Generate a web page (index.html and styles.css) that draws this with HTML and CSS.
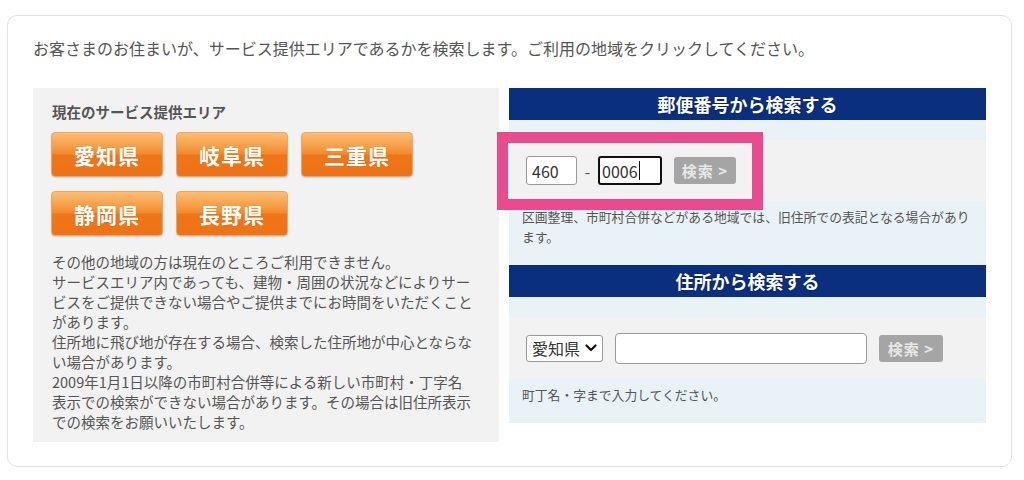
FILE: index.html
```html
<!DOCTYPE html>
<html lang="ja">
<head>
<meta charset="utf-8">
<title>サービス提供エリア検索</title>
<link rel="stylesheet" href="styles.css">
</head>
<body>
<div class="card">
  <p class="intro">お客さまのお住まいが、サービス提供エリアであるかを検索します。ご利用の地域をクリックしてください。</p>
  <div class="cols">
    <section class="area">
      <h2 class="area-title">現在のサービス提供エリア</h2>
      <div class="prefs">
        <a class="pref">愛知県</a>
        <a class="pref">岐阜県</a>
        <a class="pref">三重県</a>
        <a class="pref">静岡県</a>
        <a class="pref">長野県</a>
      </div>
      <div class="area-notes">
        <p>その他の地域の方は現在のところご利用できません。</p>
        <p>サービスエリア内であっても、建物・周囲の状況などによりサービスをご提供できない場合やご提供までにお時間をいただくことがあります。</p>
        <p>住所地に飛び地が存在する場合、検索した住所地が中心とならない場合があります。</p>
        <p>2009年1月1日以降の市町村合併等による新しい市町村・丁字名表示での検索ができない場合があります。その場合は旧住所表示での検索をお願いいたします。</p>
      </div>
    </section>
    <div class="search">
      <section class="search-block">
        <h3 class="search-head">郵便番号から検索する</h3>
        <div class="search-spacer"></div>
        <div class="search-row">
          <span class="field zip1">460</span>
          <span class="dash">-</span>
          <span class="field zip2">0006<span class="caret"></span></span>
          <span class="btn">検索 &gt;</span>
          <div class="highlight"></div>
        </div>
        <p class="search-note">区画整理、市町村合併などがある地域では、旧住所での表記となる場合があります。</p>
      </section>
      <section class="search-block">
        <h3 class="search-head">住所から検索する</h3>
        <div class="search-spacer"></div>
        <div class="search-row">
          <span class="field select">愛知県<svg class="chev" width="12" height="8" viewBox="0 0 12 8"><path d="M1.5 1.5 L6 6 L10.5 1.5" fill="none" stroke="#111" stroke-width="2.2" stroke-linecap="round" stroke-linejoin="round"/></svg></span>
          <span class="field addr"></span>
          <span class="btn btn-addr">検索 &gt;</span>
        </div>
        <p class="search-note">町丁名・字まで入力してください。</p>
      </section>
    </div>
  </div>
</div>
</body>
</html>
```
FILE: styles.css
```css
* { box-sizing: border-box; }
body {
  margin: 0;
  background: #fff;
  font-family: "Noto Sans CJK JP", "Noto Sans", sans-serif;
  color: #555;
}
.card {
  width: 1005px;
  height: 452px;
  margin: 15px 0 0 7px;
  border: 1px solid #e3e3e3;
  border-radius: 10px;
  padding: 20px 25px 0 25px;
}
.intro {
  margin: 0 0 28px;
  font-size: 16px;
  line-height: 24px;
  color: #555;
}
.cols {
  display: grid;
  grid-template-columns: 466px 477px;
  column-gap: 10px;
  align-items: start;
}
.area {
  background: #f2f2f2;
  padding: 14px 23px 10px 19px;
}
.area-title {
  margin: 0 0 10px;
  font-size: 14.5px;
  line-height: 20px;
  font-weight: bold;
  color: #555;
}
.prefs {
  display: grid;
  grid-template-columns: repeat(3, 112px);
  column-gap: 13px;
  row-gap: 14px;
  margin: 0 0 16px -1px;
}
.pref {
  display: flex;
  align-items: center;
  justify-content: center;
  height: 45px;
  border: 1px solid #f2a468;
  border-radius: 4px;
  background: linear-gradient(to bottom, #fbbe72 0%, #f7a04a 30%, #f38a2c 48%, #ef7618 52%, #ee7217 100%);
  color: #fff;
  font-size: 21px;
  font-weight: bold;
  letter-spacing: 1px;
  text-shadow: 0 0 1px rgba(180, 70, 0, 0.35);
  box-shadow: 0 1px 1px rgba(0, 0, 0, 0.12);
}
.area-notes p {
  margin: 0;
  font-size: 14.5px;
  line-height: 20px;
  color: #555;
}
.search-head {
  margin: 0;
  height: 32px;
  background: #0b2f7f;
  color: #fff;
  font-size: 18px;
  line-height: 32px;
  font-weight: bold;
  text-align: center;
  text-shadow: 0 0 2px rgba(0, 0, 0, 0.45);
}
.search-spacer {
  height: 20px;
  background: #e9f2f6;
}
.search-row {
  position: relative;
  display: flex;
  align-items: center;
  height: 61px;
  padding-left: 17px;
  background: #f2f2f2;
}
.search-block + .search-block .search-row { height: 62px; }
.field {
  display: flex;
  align-items: center;
  height: 29px;
  background: #fff;
  border: 1px solid #9a9a9a;
  border-radius: 3px;
  padding-left: 5px;
  font-size: 16px;
  color: #333;
}
.zip1 { width: 51px; }
.dash {
  width: 21px;
  text-align: center;
  font-size: 16px;
  color: #555;
}
.zip2 {
  width: 64px;
  border: 2px solid #111;
  padding-left: 2px;
}
.caret {
  display: inline-block;
  width: 1px;
  height: 19px;
  background: #111;
  margin-left: 1px;
}
.btn {
  display: flex;
  align-items: center;
  justify-content: center;
  width: 62px;
  height: 27px;
  margin-left: 12px;
  background: #a5a5a5;
  border-radius: 3px;
  color: #e8e8e8;
  font-size: 15px;
  font-weight: bold;
  letter-spacing: 1px;
}
.btn-addr { width: 64px; }
.select {
  width: 77px;
  height: 27px;
  padding-left: 5px;
  gap: 5px;
}
.chev { display: block; }
.addr {
  width: 252px;
  height: 31px;
  margin-left: 12px;
  border-radius: 4px;
}
.search-note {
  margin: 0;
  padding: 6px 10px 18px 13px;
  background: #e9f2f6;
  font-size: 12.8px;
  line-height: 20px;
  color: #555;
}
.highlight {
  position: absolute;
  left: -12px;
  top: -8px;
  width: 266px;
  height: 78px;
  border: 11px solid #ea4b8e;
  pointer-events: none;
}
```
